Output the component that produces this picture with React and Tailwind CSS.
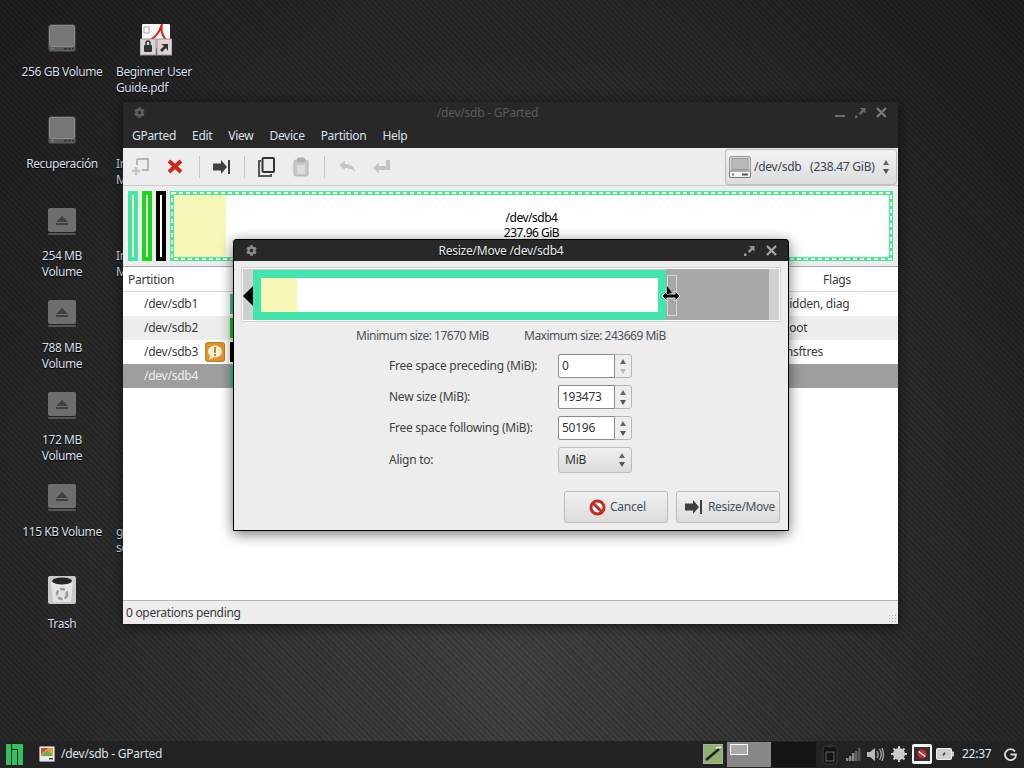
import React from "react";
import { FaCog } from "react-icons/fa";

const Disk = () => (
  <svg width="28" height="28" viewBox="0 0 28 28">
    <rect x="0.5" y="0.5" width="27" height="27" rx="2" fill="#5c5c5c" />
    <rect x="1.5" y="1.5" width="25" height="21" rx="2" fill="#777" stroke="#8a8a8a" />
    <rect x="3" y="24" width="3" height="1.5" fill="#4a9a5a" />
    <rect x="16" y="24" width="3" height="1.5" fill="#333" />
    <rect x="20" y="24" width="3" height="1.5" fill="#333" />
    <rect x="24" y="24" width="2" height="1.5" fill="#333" />
  </svg>
);

const Eject = () => (
  <svg width="28" height="28" viewBox="0 0 28 28">
    <rect x="0" y="0" width="28" height="24" rx="2" fill="#6e6e6e" />
    <rect x="0" y="25" width="28" height="2" rx="1" fill="#555" />
    <path d="M14 8 L20 14 H8 Z" fill="#3f3f3f" />
    <rect x="8" y="15" width="12" height="2" fill="#3f3f3f" />
  </svg>
);

const Trash = () => (
  <svg width="28" height="29" viewBox="0 0 28 29">
    <rect x="0" y="0" width="28" height="28" rx="2" fill="#c9c9c9" />
    <ellipse cx="14" cy="5" rx="10" ry="3.5" fill="#262626" />
    <path d="M3 6 L5 26 H23 L25 6 Q14 12 3 6Z" fill="#e4e4e4" />
    <circle cx="14" cy="18" r="5" fill="none" stroke="#9a9a9a" strokeWidth="2.5" strokeDasharray="5 2" />
  </svg>
);

const Pdf = () => (
  <svg width="32" height="32" viewBox="0 0 32 32">
    <rect x="2" y="0" width="28" height="24" rx="1" fill="#f7f7f7" />
    <path d="M22 0 C20 8 14 16 4 19 M22 0 C20 8 24 16 30 18" fill="none" stroke="#d8201c" strokeWidth="2" />
    <rect x="4" y="3" width="5" height="6" fill="none" stroke="#aaa" />
    <rect x="0" y="15" width="16" height="16" fill="#dcd4d0" stroke="#999" />
    <rect x="17" y="15" width="15" height="16" fill="#dcd4d0" stroke="#999" />
    <rect x="4" y="21" width="8" height="7" rx="1" fill="#333" />
    <path d="M6 21 V19 a2 2 0 0 1 4 0 V21" fill="none" stroke="#333" strokeWidth="1.5" />
    <path d="M21 20 H28 V27 L26 24 L22 28 L20 26 L24 22Z" fill="#333" />
  </svg>
);

const Gear = ({ c = "#666" }) => <FaCog size={11} color={c} />;

const WinMax = ({ c = "#8a8a8a" }) => (
  <svg width="11" height="10" viewBox="0 0 11 10">
    <path d="M5 0 H10.5 V5.5 L8.7 3.7 L5.5 7 L3.8 5.2 L7 2Z" fill={c} />
    <rect x="0" y="7.5" width="2.5" height="2.5" fill={c} />
  </svg>
);

const WinClose = ({ c = "#8a8a8a" }) => (
  <svg width="11" height="11" viewBox="0 0 11 11">
    <path d="M1 1 L10 10 M10 1 L1 10" stroke={c} strokeWidth="2.2" />
  </svg>
);

const ResizeGlyph = () => (
  <svg width="17" height="14" viewBox="0 0 17 14">
    <path d="M0 3.5 H8 V0 L14 7 L8 14 V10.5 H0Z" fill="#3f3f3f" />
    <rect x="15" y="0" width="2" height="14" fill="#3f3f3f" />
  </svg>
);

const Stepper = ({ down = "#555", gap = "gap-[4px]" }) => (
  <span className={`flex flex-col items-center shrink-0 ${gap}`}>
    <svg width="6" height="5" viewBox="0 0 6 5"><path d="M3 0 L6 5 H0Z" fill="#666" /></svg>
    <svg width="6" height="5" viewBox="0 0 6 5"><path d="M3 5 L6 0 H0Z" fill={down} /></svg>
  </span>
);

const DesktopItem = ({ icon, lines, left }) => (
  <div className={`h-[92px] flex flex-col ${left ? "items-start" : "items-center"}`}>
    <div className={`h-[39px] flex items-start w-full ${left ? "justify-start" : "justify-center"}`}>{icon}</div>
    <div className={`text-[12px] leading-[16px] mt-[1px] tracking-[-0.4px] text-[#d5dfe8] [text-shadow:0_1px_1px_#000] ${left ? "text-left" : "text-center"}`}>
      {lines.map((l) => (
        <div key={l} className="whitespace-nowrap">{l}</div>
      ))}
    </div>
  </div>
);

const Separator = () => <div className="w-[1px] h-[22px] bg-[#c8c8c8]" />;

const rows = [
  { name: "/dev/sdb1", swatch: "bg-[#35c79a]", flags: "hidden, diag", cls: "bg-white text-[#3a3a3a]" },
  { name: "/dev/sdb2", swatch: "bg-[#10c010]", flags: "boot", cls: "bg-[#ededed] text-[#3a3a3a]" },
  { name: "/dev/sdb3", swatch: "bg-black", flags: "msftres", warn: true, cls: "bg-white text-[#3a3a3a]" },
  { name: "/dev/sdb4", swatch: "bg-[#35c79a]", flags: "", cls: "bg-[#9e9e9e] text-[#eeeeee]" },
];

const Spin = ({ value, faded }) => (
  <div className="h-[24px] w-[74px] flex rounded-[3px] border border-[#b5b5b5] bg-[#ededed]">
    <div className="w-[57px] bg-white rounded-l-[2px] border border-[#8a8a8a] -m-[1px] pl-[3px] text-[12px] leading-[22px] text-[#333]">{value}</div>
    <div className="flex-1 flex items-center justify-center">
      <Stepper gap="gap-[5px]" down={faded ? "#bdbdbd" : "#555"} />
    </div>
  </div>
);

const SmallStrip = ({ border, strip }) => (
  <div className={`w-[10px] h-[70px] border-[4px] ${border} ${strip}`} />
);

export default function App() {
  return (
    <div className="w-[1024px] h-[768px] flex flex-col overflow-hidden tracking-[-0.25px] font-['Noto_Sans',sans-serif]">
      <div className="relative flex-1 flex bg-[#2a2a2a] [background-image:repeating-linear-gradient(45deg,rgba(0,0,0,.16)_0_2px,transparent_2px_4px),radial-gradient(ellipse_at_50%_90%,#434343_0%,#2e2e2e_55%,#1e1e1e_100%)]">
        <div className="w-[124px] pt-[24px] flex flex-col shrink-0">
          <DesktopItem icon={<Disk />} lines={["256 GB Volume"]} />
          <DesktopItem icon={<Disk />} lines={["Recuperación"]} />
          <DesktopItem icon={<Eject />} lines={["254 MB", "Volume"]} />
          <DesktopItem icon={<Eject />} lines={["788 MB", "Volume"]} />
          <DesktopItem icon={<Eject />} lines={["172 MB", "Volume"]} />
          <DesktopItem icon={<Eject />} lines={["115 KB Volume"]} />
          <DesktopItem icon={<Trash />} lines={["Trash"]} />
        </div>
        <div className="w-[90px] -ml-[8px] pt-[24px] flex flex-col">
          <DesktopItem left icon={<div className="pl-[24px]"><Pdf /></div>} lines={["Beginner User", "Guide.pdf"]} />
          <DesktopItem left icon={<div />} lines={["In", "M"]} />
          <DesktopItem left icon={<div />} lines={["In", "M"]} />
          <div className="h-[184px]" />
          <DesktopItem left icon={<div />} lines={["g", "se"]} />
        </div>

        {/* main window */}
        <div className="absolute left-[123px] top-[102px] w-[775px] h-[522px] flex flex-col shadow-[0_2px_12px_rgba(0,0,0,.6)] rounded-t-[3px] overflow-hidden">
          <div className="h-[22px] bg-[#282828] relative flex items-center justify-center pr-[46px] shrink-0">
            <div className="absolute left-[11px] top-[5px]"><Gear c="#5f5f5f" /></div>
            <span className="text-[12px] text-[#5a5a5a]">/dev/sdb - GParted</span>
            <div className="absolute right-[11px] top-[5px] flex items-center gap-[10px]">
              <div className="w-[10px] h-[2px] bg-[#6a6a6a] mt-[7px]" />
              <WinMax c="#6a6a6a" />
              <WinClose c="#7a7a7a" />
            </div>
          </div>
          <div className="h-[24px] bg-[#282828] flex items-center pl-[9px] gap-[16px] text-[12px] tracking-[-0.3px] text-[#d8e2ea] shrink-0">
            <span>GParted</span><span>Edit</span><span>View</span><span>Device</span><span>Partition</span><span>Help</span>
          </div>
          <div className="h-[38px] bg-[#ededed] border-b border-[#c9c9c9] flex items-center pl-[9px] relative shrink-0">
            <svg width="18" height="18" viewBox="0 0 18 18" className="mr-[17px]">
              <path d="M5 1 H16 V12 H10 M5 1 V7" fill="none" stroke="#b5b5b5" strokeWidth="2" />
              <path d="M4 9 V17 M0 13 H8" stroke="#c4c4c4" strokeWidth="2.5" />
            </svg>
            <svg width="16" height="15" viewBox="0 0 16 15" className="mr-[16px]">
              <path d="M2 2 L14 13 M14 2 L2 13" stroke="#d0261c" strokeWidth="4" />
            </svg>
            <Separator />
            <div className="ml-[13px] mr-[14px]"><ResizeGlyph /></div>
            <Separator />
            <svg width="17" height="20" viewBox="0 0 17 20" className="ml-[13px] mr-[18px]">
              <rect x="4.5" y="1" width="11.5" height="14" rx="1" fill="none" stroke="#333" strokeWidth="2" />
              <path d="M3 4 H1 V19 H13 V17" fill="none" stroke="#555" strokeWidth="2" />
            </svg>
            <svg width="16" height="20" viewBox="0 0 16 20" className="mr-[15px]">
              <rect x="1" y="3" width="14" height="16" rx="2" fill="#c6c6c6" stroke="#b4b4b4" />
              <rect x="4" y="0.5" width="8" height="5" rx="1.5" fill="#b0b0b0" />
              <rect x="4" y="8" width="8" height="9" fill="#dcdcdc" />
            </svg>
            <Separator />
            <svg width="18" height="11" viewBox="0 0 18 11" className="ml-[13px] mr-[17px]">
              <path d="M1 4 L7 0 V3 C12 3 16 5 17 11 C14 8 11 7 7 7 V9Z" fill="#c4c4c4" />
            </svg>
            <svg width="17" height="13" viewBox="0 0 17 13">
              <path d="M0 8 L6 3 V6 H13 V0 H17 V10 H6 V13Z" fill="#c4c4c4" />
            </svg>
            <div className="absolute right-[1px] top-[1px] w-[172px] h-[36px] rounded-[3px] border border-[#bcbcbc] bg-gradient-to-b from-[#f3f3f3] to-[#dcdcdc] flex items-center pl-[3px] pr-[7px] text-[12px] text-[#3c4650]">
              <svg width="22" height="22" viewBox="0 0 22 22" className="mr-[3px] shrink-0">
                <rect x="0.5" y="0.5" width="21" height="21" rx="2" fill="#d6d6d6" stroke="#999" />
                <rect x="3" y="2.5" width="16" height="11" fill="#b8b8b8" stroke="#9a9a9a" />
                <rect x="0.5" y="15" width="21" height="6.5" rx="1" fill="#f3f3f3" stroke="#777" />
                <rect x="3" y="17.5" width="2" height="2" fill="#4a9a5a" />
                <rect x="13" y="17.5" width="6" height="2" fill="#555" />
              </svg>
              <span className="whitespace-pre">/dev/sdb   (238.47 GiB)</span>
              <span className="ml-auto"><Stepper /></span>
            </div>
          </div>
          <div className="h-[81px] bg-[#ededed] border-b border-[#a9a9a9] flex items-start pt-[5px] pl-[5px] gap-[4px] shrink-0">
            <SmallStrip border="border-[#42e5ac]" strip="bg-[#f7f7b8]" />
            <SmallStrip border="border-[#18d918]" strip="bg-white" />
            <SmallStrip border="border-black" strip="bg-white" />
            <div className="relative w-[723px] h-[70px] bg-white border-[4px] border-[#42e5ac] flex">
              <div className="w-[52px] bg-[#f7f7b8] shrink-0" />
              <div className="flex-1 text-center text-[12px] leading-[15px] tracking-[-0.5px] text-black pt-[15px] pr-[52px]">
                <div>/dev/sdb4</div>
                <div>237.96 GiB</div>
              </div>
              <svg width="723" height="70" viewBox="0 0 723 70" className="absolute -left-[4px] -top-[4px]">
                <rect x="2" y="2" width="719" height="66" fill="none" stroke="#f7f7b8" strokeWidth="2" strokeDasharray="4 3" />
              </svg>
            </div>
          </div>
          <div className="flex-1 bg-white flex flex-col min-h-0">
            <div className="h-[25px] bg-white border-b border-[#dcdcdc] flex items-center pt-[1px] text-[12px] text-[#3a3a3a] shrink-0 relative">
              <span className="ml-[5px]">Partition</span>
              <span className="ml-auto mr-[47px]">Flags</span>
            </div>
            {rows.map((r) => (
              <div key={r.name} className={`h-[24px] flex items-center text-[12px] shrink-0 ${r.cls}`}>
                <span className="ml-[21px] w-[61px]">{r.name}</span>
                {r.warn ? (
                  <svg width="20" height="20" viewBox="0 0 20 20" className="shrink-0">
                    <rect x="0.5" y="0.5" width="19" height="19" rx="2" fill="#e0932a" stroke="#b87a22" />
                    <ellipse cx="10" cy="9.5" rx="7" ry="6" fill="#f8f0d8" />
                    <path d="M5 14 L4 18 L9 15Z" fill="#f8f0d8" />
                    <rect x="9" y="5" width="2" height="6" fill="#c9842a" />
                    <rect x="9" y="12" width="2" height="2" fill="#c9842a" />
                  </svg>
                ) : (
                  <span className="w-[20px] shrink-0" />
                )}
                <span className={`w-[6px] h-[20px] ml-[5px] shrink-0 ${r.swatch}`} />
                <span className="ml-[546px] whitespace-nowrap">{r.flags}</span>
              </div>
            ))}
          </div>
          <div className="h-[24px] bg-[#ededed] border-t border-[#b5b5b5] flex items-center pl-[3px] text-[12px] tracking-[-0.3px] text-[#3a3a3a] shrink-0 relative">
            0 operations pending
            <div className="absolute right-[1px] bottom-[1px] w-[9px] h-[9px] [background-image:radial-gradient(#a8a8a8_1px,transparent_1px)] [background-size:3px_3px]" />
          </div>
        </div>

        {/* dialog */}
        <div className="absolute left-[233px] top-[239px] w-[556px] h-[292px] flex flex-col border border-black rounded-t-[3px] bg-[#ededed] shadow-[0_3px_14px_rgba(0,0,0,.55)]">
          <div className="h-[21px] bg-[#282828] relative flex items-center justify-center pr-[20px] shrink-0">
            <div className="absolute left-[12px] top-[5px]"><Gear c="#8a8a8a" /></div>
            <span className="text-[12px] text-[#e8eef2] [text-shadow:0_1px_1px_#000]">Resize/Move /dev/sdb4</span>
            <div className="absolute right-[11px] top-[5px] flex items-center gap-[11px]">
              <WinMax c="#9a9a9a" />
              <WinClose c="#a8a8a8" />
            </div>
          </div>
          <div className="flex-1 flex flex-col min-h-0">
            <div className="mx-[8px] mt-[7px] h-[53px] border border-white outline outline-1 outline-[#d4d4d4] bg-[#d0d0d0] flex items-start relative shrink-0">
              <div className="absolute left-[0px] top-[17px] w-0 h-0 border-y-[10px] border-y-transparent border-r-[10px] border-r-black" />
              <div className="ml-[10px] mt-[1px] h-[50px] w-[413px] border-[8px] border-[#42e5ac] bg-white shrink-0">
                <div className="w-[36px] h-full bg-[#f7f7b8]" />
              </div>
              <div className="h-[51px] w-[103px] bg-[#a8a8a8] relative shrink-0">
                <div className="absolute left-[1px] top-[6px] w-[10px] h-[41px] border border-[#d6d6d6]" />
              </div>
              <svg width="20" height="20" viewBox="0 0 20 20" className="absolute left-[418px] top-[17px]">
                <path d="M1 10 L6 5 V8 H14 V5 L19 10 L14 15 V12 H6 V15Z" fill="#000" stroke="#e8e8e8" strokeWidth="1" />
                <path d="M6 0 V8 L11 7Z" fill="#000" />
              </svg>
            </div>
            <div className="flex mt-[7px] pl-[122px] text-[12px] leading-[16px] tracking-[-0.5px] text-[#4a5158] shrink-0">
              <span className="w-[168px]">Minimum size: 17670 MiB</span>
              <span>Maximum size: 243669 MiB</span>
            </div>
            <div className="mt-[10px] pl-[155px] grid grid-cols-[169px_74px] gap-y-[7px] items-center text-[12px] text-[#3f3f3f] shrink-0">
              <span>Free space preceding (MiB):</span>
              <Spin value="0" faded />
              <span>New size (MiB):</span>
              <Spin value="193473" />
              <span>Free space following (MiB):</span>
              <Spin value="50196" />
              <span>Align to:</span>
              <div className="h-[26px] w-[74px] rounded-[3px] border border-[#bcbcbc] bg-gradient-to-b from-[#f0f0f0] to-[#dcdcdc] flex items-center pl-[6px] pr-[6px] text-[#333]">
                MiB
                <span className="ml-auto"><Stepper /></span>
              </div>
            </div>
            <div className="mt-[18px] pr-[8px] flex justify-end gap-[8px] shrink-0">
              <button className="w-[104px] h-[32px] rounded-[3px] border border-[#bcbcbc] bg-gradient-to-b from-[#f0f0f0] to-[#dcdcdc] flex items-center pl-[24px] gap-[4px] text-[12px] text-[#45525e]">
                <svg width="17" height="17" viewBox="0 0 17 17">
                  <circle cx="8.5" cy="8.5" r="6.5" fill="#fff" stroke="#c8281c" strokeWidth="3" />
                  <path d="M4 4 L13 13" stroke="#c8281c" strokeWidth="3" />
                </svg>
                Cancel
              </button>
              <button className="w-[104px] h-[32px] rounded-[3px] border border-[#bcbcbc] bg-gradient-to-b from-[#f0f0f0] to-[#dcdcdc] flex items-center pl-[8px] gap-[6px] text-[12px] tracking-[-0.35px] text-[#45525e]">
                <ResizeGlyph />
                Resize/Move
              </button>
            </div>
          </div>
        </div>
      </div>

      {/* taskbar */}
      <div className="h-[27px] bg-[#232323] flex items-center pb-[1px] text-[12px] text-[#dbe5ec] shrink-0 relative">
        <svg width="17" height="21" viewBox="0 0 17 21" className="ml-[6px] shrink-0">
          <rect x="0" y="0" width="5" height="21" fill="#34c060" />
          <rect x="6" y="6" width="5" height="15" fill="#34c060" />
          <rect x="6" y="0" width="11" height="5" fill="#34c060" />
          <rect x="12" y="5" width="5" height="16" fill="#34c060" />
        </svg>
        <svg width="16" height="16" viewBox="0 0 16 16" className="ml-[16px] shrink-0">
          <rect x="0.5" y="0.5" width="15" height="15" rx="1" fill="#e8e8e8" stroke="#999" />
          <rect x="2" y="2" width="12" height="8" fill="#e4a23a" />
          <path d="M2 10 L8 4 L14 10Z" fill="#6ca860" />
          <path d="M2 2 H9 L2 8Z" fill="#d04a3a" />
          <rect x="10" y="12" width="4" height="1.5" fill="#444" />
        </svg>
        <span className="ml-[6px]">/dev/sdb - GParted</span>
        <div className="ml-auto flex items-center h-full">
          <svg width="20" height="20" viewBox="0 0 20 20" className="mr-[4px]">
            <rect x="0" y="0" width="20" height="20" rx="1" fill="#8fb070" stroke="#bbb" />
            <path d="M3 16 L16 5" stroke="#222" strokeWidth="2.5" />
            <path d="M13 4 L18 3" stroke="#eee" strokeWidth="1.5" />
          </svg>
          <div className="w-[44px] h-[25px] bg-[#888] mt-[1px] relative">
            <div className="absolute left-[3px] top-[2px] w-[18px] h-[11px] border border-white bg-[#aaa]" />
          </div>
          <div className="w-[45px] h-[25px] bg-[#141414] mt-[1px]" />
          <svg width="16" height="21" viewBox="0 0 16 21" className="ml-[6px]">
            <rect x="1" y="2" width="14" height="18" rx="3" fill="#141414" stroke="#3a3a3a" />
            <rect x="5" y="0.5" width="6" height="3" fill="#333" />
            <rect x="4" y="8" width="8" height="9" fill="#141414" stroke="#666" />
          </svg>
          <svg width="15" height="13" viewBox="0 0 15 13" className="ml-[8px]">
            <rect x="0" y="10" width="2.5" height="3" fill="#888" />
            <rect x="3" y="8" width="2.5" height="5" fill="#888" />
            <rect x="6" y="5" width="2.5" height="8" fill="#888" />
            <rect x="9" y="3" width="2.5" height="10" fill="#666" />
            <rect x="12" y="0" width="2.5" height="13" fill="#555" />
          </svg>
          <svg width="18" height="15" viewBox="0 0 18 15" className="ml-[6px]">
            <path d="M0 5 H3 L8 1 V14 L3 10 H0Z" fill="#bbb" />
            <path d="M10 4 Q12 7.5 10 11 M12.5 2 Q16 7.5 12.5 13 M15 1 Q18 7.5 15 14" fill="none" stroke="#aaa" strokeWidth="1.3" />
          </svg>
          <svg width="16" height="16" viewBox="0 0 16 16" className="ml-[6px]">
            <circle cx="8" cy="8" r="6" fill="#ccc" />
            <path d="M8 0 V16 M0 8 H16 M2.5 2.5 L13.5 13.5 M13.5 2.5 L2.5 13.5" stroke="#ccc" strokeWidth="2" />
          </svg>
          <svg width="20" height="20" viewBox="0 0 20 20" className="ml-[5px]">
            <rect x="0" y="0" width="20" height="20" rx="2" fill="#f5f5f5" />
            <rect x="2" y="3" width="16" height="14" fill="#333" />
            <circle cx="10" cy="10" r="4.5" fill="#c82c2c" />
            <path d="M6.5 7.5 L13.5 12.5" stroke="#fff" strokeWidth="1.5" />
          </svg>
          <svg width="18" height="12" viewBox="0 0 18 12" className="ml-[4px]">
            <rect x="0.5" y="0.5" width="15" height="11" rx="1" fill="#d0d0d0" stroke="#eee" />
            <rect x="16" y="3.5" width="2" height="5" fill="#ccc" />
            <path d="M4 8 L9 4 V6 L12 4 L7 8 V6Z" fill="#444" />
          </svg>
          <span className="ml-[8px] w-[32px] text-[#d6ecff]">22:37</span>
          <svg width="13" height="13" viewBox="0 0 13 13" className="ml-[10px] mr-[7px]">
            <path d="M11 3.5 A5.5 5.5 0 1 0 12 6.5 H6.5" fill="none" stroke="#ddd" strokeWidth="1.8" />
          </svg>
        </div>
      </div>
    </div>
  );
}
